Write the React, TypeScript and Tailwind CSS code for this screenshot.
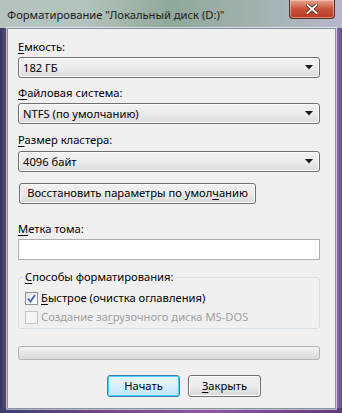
import React from "react";

const font = { fontFamily: '"Noto Sans", "Open Sans", sans-serif' };

function Arrow() {
  return (
    <svg width="8" height="5" viewBox="0 0 8 5" className="mr-[6px]">
      <path d="M0 0 L8 0 L4 4.5 Z" fill="#1a1a1a" />
    </svg>
  );
}

function Combo({ text }: { text: string }) {
  return (
    <div className="h-[21px] w-[302px] rounded-[3px] border border-[#707070] bg-gradient-to-b from-[#f3f3f3] via-[#ebebeb] to-[#dbdbdb] flex items-center justify-between pl-[4px] shadow-[inset_0_0_0_1px_#fbfbfb]">
      <span className="text-[11.2px] text-black leading-none whitespace-nowrap">{text}</span>
      <Arrow />
    </div>
  );
}

function Label({ first, rest }: { first: string; rest: string }) {
  return (
    <div className="h-[14px] text-[11.2px] leading-[14px] text-black whitespace-nowrap">
      <span className="underline underline-offset-[2px]">{first}</span>
      {rest}
    </div>
  );
}

export default function App() {
  return (
    <div
      style={font}
      className="relative w-[342px] h-[413px] overflow-hidden bg-[linear-gradient(90deg,#2d3a5e_0%,#6a4a7a_2%,#b2bcb8_3%,#a9bbb2_30%,#8ea596_55%,#a5b2b3_80%,#a38fbf_97%,#6a4a8c_100%)]"
    >
      <div className="absolute inset-x-0 top-0 h-[28px] bg-[linear-gradient(90deg,#b6c2bf_0%,#b4c3bd_25%,#90a89b_50%,#9fb0ab_70%,#aab6b9_85%,#b7b6cf_100%)]" />
      <div className="absolute inset-x-0 bottom-0 h-[5px] bg-[linear-gradient(90deg,#3b3e6e,#6f4a85_30%,#8a5aa0_60%,#5b3e7a)]" />
      <div className="relative flex h-[28px] items-start justify-between">
        <div className="pl-[7px] pt-[7px] text-[11.2px] leading-[16px] text-[#1a1a1a] whitespace-nowrap">
          Форматирование "Локальный диск (D:)"
        </div>
        <div className="mr-[7px] mt-0 h-[19px] w-[46px] rounded-b-[4px] border border-t-0 border-[#5a2a24] bg-gradient-to-b from-[#e7a28e] via-[#c8523b] to-[#b83a22] flex items-center justify-center shadow-[inset_0_0_0_1px_rgba(255,220,210,0.5)]">
          <svg width="12" height="10" viewBox="0 0 12 10">
            <path d="M1.5 1 L10.5 9 M10.5 1 L1.5 9" stroke="#3a1a14" strokeWidth="3.4" strokeLinecap="square" />
            <path d="M1.5 1 L10.5 9 M10.5 1 L1.5 9" stroke="#ffffff" strokeWidth="2" strokeLinecap="square" />
          </svg>
        </div>
      </div>
      <div className="relative ml-[7px] mr-[6px] h-[381px] border border-[#8393a0] bg-[#f0f0f0] flex flex-col pl-[10px] shadow-[0_0_0_1px_rgba(255,255,255,0.6)]">
        <div className="mt-[11px]">
          <Label first="Е" rest="мкость:" />
        </div>
        <div className="mt-[3px]">
          <Combo text="182 ГБ" />
        </div>
        <div className="mt-[8px]">
          <Label first="Ф" rest="айловая система:" />
        </div>
        <div className="mt-[3px]">
          <Combo text="NTFS (по умолчанию)" />
        </div>
        <div className="mt-[9px]">
          <Label first="Р" rest="азмер кластера:" />
        </div>
        <div className="mt-[4px]">
          <Combo text="4096 байт" />
        </div>
        <div className="mt-[11px] ml-[1px] h-[21px] w-[237px] rounded-[3px] border border-[#707070] bg-gradient-to-b from-[#f2f2f2] via-[#ebebeb] to-[#d8d8d8] flex items-center justify-center text-[11.2px] text-black whitespace-nowrap shadow-[inset_0_0_0_1px_#fcfcfc]">
          <span>
            Восстановить параметры по умол<span className="underline underline-offset-[2px]">ч</span>анию
          </span>
        </div>
        <div className="mt-[18px]">
          <Label first="М" rest="етка тома:" />
        </div>
        <div className="mt-[3px] h-[21px] w-[302px] border border-[#abadb3] bg-white" />
        <div className="relative mt-[17px] h-[52px] w-[302px] rounded-[3px] border border-[#d5dfe5]">
          <div className="absolute -top-[8px] left-[4px] bg-[#f0f0f0] px-[2px] text-[11.2px] leading-[14px] text-black whitespace-nowrap">
            <span className="underline underline-offset-[2px]">С</span>пособы форматирования:
          </div>
          <div className="mt-[13px] ml-[6px] flex items-center h-[14px]">
            <div className="h-[13px] w-[13px] border border-[#8e8f8f] bg-gradient-to-br from-[#dfe3ea] to-[#ffffff] flex items-center justify-center">
              <svg width="9" height="9" viewBox="0 0 9 9">
                <path d="M1 4.5 L3.5 7.5 L8 1" stroke="#4a62a8" strokeWidth="1.8" fill="none" />
              </svg>
            </div>
            <span className="ml-[3px] text-[11.2px] text-black whitespace-nowrap">
              <span className="underline underline-offset-[2px]">Б</span>ыстрое (очистка оглавления)
            </span>
          </div>
          <div className="mt-[5px] ml-[6px] flex items-center h-[14px]">
            <div className="h-[13px] w-[13px] border border-[#c5c5c5] bg-[#f4f4f4]" />
            <span className="ml-[3px] text-[11.2px] text-[#a0a0a0] whitespace-nowrap">
              Создание за<span className="underline underline-offset-[2px]">г</span>рузочного диска MS-DOS
            </span>
          </div>
        </div>
        <div className="mt-[17px] h-[14px] w-[302px] rounded-[3px] border border-[#b2b2b2] bg-gradient-to-b from-[#f4f4f4] via-[#e6e6e6] to-[#dadada]" />
        <div className="mt-[15px] flex gap-[8px] pl-[89px]">
          <div className="h-[22px] w-[73px] rounded-[3px] border border-[#3c7fb1] bg-gradient-to-b from-[#eaf6fd] via-[#d9f0fc] to-[#bee6fd] flex items-center justify-center text-[11.2px] text-black shadow-[inset_0_0_0_1px_#48d3f5]">
            Начать
          </div>
          <div className="h-[22px] w-[73px] rounded-[3px] border border-[#707070] bg-gradient-to-b from-[#f2f2f2] via-[#ebebeb] to-[#d8d8d8] flex items-center justify-center text-[11.2px] text-black shadow-[inset_0_0_0_1px_#fcfcfc]">
            <span>
              <span className="underline underline-offset-[2px]">З</span>акрыть
            </span>
          </div>
        </div>
      </div>
    </div>
  );
}
